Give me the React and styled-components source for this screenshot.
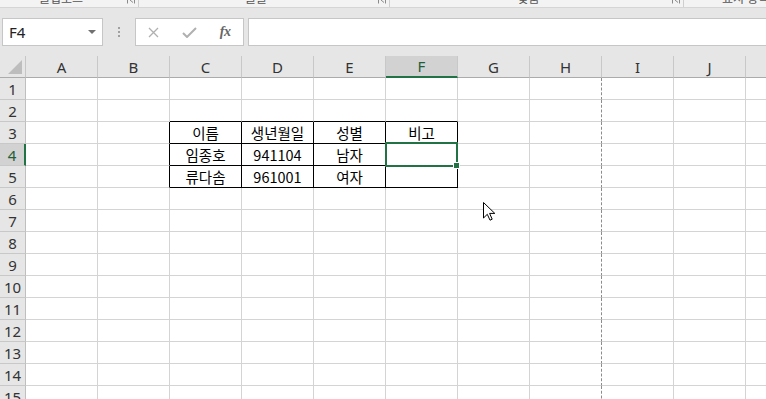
import React from 'react'
import styled, { createGlobalStyle } from 'styled-components'

const GlobalStyle = createGlobalStyle`
  body {
    margin: 0;
    background: #fff;
    overflow: hidden;
  }
`

const Window = styled.div`
  position: relative;
  width: 766px;
  height: 399px;
  overflow: hidden;
  background: #fff;
  font-family: "Noto Sans", "Noto Sans CJK KR", sans-serif;
`

/* ribbon bottom edge (group labels cut off by the window) */
const RibbonStrip = styled.div`
  display: flex;
  height: 7px;
  background: #f3f3f3;
  border-bottom: 1px solid #d5d5d5;
  overflow: hidden;
`

const RibbonGroup = styled.div`
  flex: none;
  width: ${p => p.$w}px;
  display: grid;
  grid-template-columns: 1fr 16px;
  box-sizing: border-box;
  border-right: 1px solid #cfcfcf;
`

const GroupLabel = styled.div`
  text-align: center;
  font-family: "Noto Sans CJK KR", sans-serif;
  font-size: 12px;
  line-height: 12px;
  margin-top: -8px;
  color: #555;
  white-space: nowrap;
`

const Launcher = styled.svg`
  display: block;
  margin: 0 0 0 5px;
`

const FormulaBar = styled.div`
  display: flex;
  align-items: center;
  height: 48px;
  padding-left: 2px;
  background: #e6e6e6;
`

const NameBox = styled.div`
  flex: none;
  box-sizing: border-box;
  width: 101px;
  height: 28px;
  display: flex;
  align-items: center;
  justify-content: space-between;
  padding: 0 6px 0 6px;
  background: #fff;
  border: 1px solid #c6c6c6;
  font-size: 15px;
  color: #222;
`

const Grip = styled.div`
  flex: none;
  width: 32px;
  display: flex;
  flex-direction: column;
  align-items: center;
  gap: 2px;

  span {
    width: 2px;
    height: 2px;
    background: #a0a0a0;
  }
`

const FxBox = styled.div`
  flex: none;
  box-sizing: border-box;
  width: 109px;
  height: 28px;
  display: grid;
  grid-template-columns: repeat(3, 1fr);
  align-items: center;
  justify-items: center;
  background: #fff;
  border: 1px solid #c6c6c6;
`

const Fx = styled.span`
  font-family: "Liberation Serif", serif;
  font-style: italic;
  font-weight: bold;
  font-size: 14px;
  color: #666;
  letter-spacing: -0.5px;
`

const FormulaInput = styled.div`
  flex: 1;
  box-sizing: border-box;
  height: 28px;
  margin-left: 4px;
  background: #fff;
  border: 1px solid #c6c6c6;
  border-right: none;
`

const HeaderRow = styled.div`
  display: flex;
  height: 22px;
  background: #e6e6e6;
`

const Corner = styled.div`
  flex: none;
  box-sizing: border-box;
  width: 26px;
  height: 22px;
  border-right: 1px solid #c6c6c6;
  border-bottom: 1px solid #ababab;
  display: flex;
  align-items: flex-end;
  justify-content: flex-end;
  padding: 0 3px 3px 0;
`

const ColHeader = styled.div`
  flex: none;
  box-sizing: border-box;
  width: 72px;
  height: 22px;
  display: flex;
  align-items: center;
  justify-content: center;
  font-size: 15px;
  color: ${p => (p.$active ? '#1e5e38' : '#333')};
  background: ${p => (p.$active ? '#d2d2d2' : '#e6e6e6')};
  border-right: 1px solid #c8c8c8;
  border-bottom: ${p => (p.$active ? '2px solid #217346' : '1px solid #ababab')};
`

const Row = styled.div`
  display: flex;
  height: 22px;
`

const RowHeader = styled.div`
  flex: none;
  box-sizing: border-box;
  width: 26px;
  height: 22px;
  display: flex;
  align-items: center;
  justify-content: center;
  font-size: 15px;
  color: ${p => (p.$active ? '#1e5e38' : '#333')};
  background: ${p => (p.$active ? '#d2d2d2' : '#e6e6e6')};
  border-right: ${p => (p.$active ? '2px solid #217346' : '1px solid #bfbfbf')};
  border-bottom: 1px solid #c8c8c8;
`

const Cell = styled.div`
  position: relative;
  flex: none;
  box-sizing: border-box;
  width: 72px;
  height: 22px;
  display: flex;
  align-items: center;
  justify-content: center;
  font-family: "Noto Sans CJK KR", sans-serif;
  font-size: 14.5px;
  color: #000;
  border-right: 1px ${p => (p.$dashed ? 'dashed' : 'solid')} ${p => p.$rc};
  border-bottom: 1px solid ${p => p.$bc};
`

const Selection = styled.div`
  position: absolute;
  z-index: 2;
  left: -1px;
  top: -2px;
  width: 73px;
  height: 25px;
  box-sizing: border-box;
  border: 2px solid #217346;
`

const FillHandle = styled.div`
  position: absolute;
  right: -4px;
  bottom: -4px;
  width: 5px;
  height: 5px;
  background: #217346;
  border: 1px solid #fff;
`

const Cursor = styled.svg`
  position: absolute;
  left: 483px;
  top: 202px;
  z-index: 5;
`

const groups = [
  { w: 139, label: '클립보드' },
  { w: 251, label: '글꼴' },
  { w: 294, label: '맞춤' },
  { w: 140, label: '표시 형식' },
]

const cols = ['A', 'B', 'C', 'D', 'E', 'F', 'G', 'H', 'I', 'J', '']

const data = {
  3: { 2: '이름', 3: '생년월일', 4: '성별', 5: '비고' },
  4: { 2: '임종호', 3: '941104', 4: '남자' },
  5: { 2: '류다솜', 3: '961001', 4: '여자' },
}

const GRID = '#d4d4d4'

function rightColor(r, c) {
  if (r >= 3 && r <= 5 && c >= 1 && c <= 5) return '#000'
  if (c === 7) return '#8c8c8c'
  return GRID
}

function bottomColor(r, c) {
  if (c >= 2 && c <= 5 && r >= 2 && r <= 5) return '#000'
  return GRID
}

export default function App() {
  const rows = Array.from({ length: 15 }, (_, i) => i + 1)

  return (
    <Window>
      <GlobalStyle />
      <RibbonStrip>
        {groups.map(g => (
          <RibbonGroup key={g.label} $w={g.w}>
            <GroupLabel>{g.label}</GroupLabel>
            <Launcher width="8" height="4" viewBox="0 0 8 4">
              <path d="M0.5 0 V3.5 M7.5 0 V3.5" stroke="#8a8a8a" fill="none" />
              <path d="M3 0 L6 2.5" stroke="#8a8a8a" fill="none" />
            </Launcher>
          </RibbonGroup>
        ))}
      </RibbonStrip>

      <FormulaBar>
        <NameBox>
          <span>F4</span>
          <svg width="8" height="4" viewBox="0 0 8 4">
            <path d="M0 0 H8 L4 4 Z" fill="#707070" />
          </svg>
        </NameBox>
        <Grip>
          <span />
          <span />
          <span />
        </Grip>
        <FxBox>
          <svg width="11" height="11" viewBox="0 0 11 11">
            <path d="M1 1 L10 10 M10 1 L1 10" stroke="#b0b0b0" strokeWidth="1.3" fill="none" />
          </svg>
          <svg width="15" height="11" viewBox="0 0 15 11">
            <path d="M1 6 L5 10 L14 1" stroke="#b0b0b0" strokeWidth="2" fill="none" />
          </svg>
          <Fx>fx</Fx>
        </FxBox>
        <FormulaInput />
      </FormulaBar>

      <HeaderRow>
        <Corner>
          <svg width="14" height="14" viewBox="0 0 14 14">
            <path d="M14 0 V14 H0 Z" fill="#bdbdbd" />
          </svg>
        </Corner>
        {cols.map((c, i) => (
          <ColHeader key={i} $active={c === 'F'}>
            {c}
          </ColHeader>
        ))}
      </HeaderRow>

      {rows.map(r => (
        <Row key={r}>
          <RowHeader $active={r === 4}>{r}</RowHeader>
          {cols.map((_, c) => (
            <Cell key={c} $rc={rightColor(r, c)} $bc={bottomColor(r, c)} $dashed={c === 7}>
              {data[r] && data[r][c]}
              {r === 4 && c === 5 && (
                <Selection>
                  <FillHandle />
                </Selection>
              )}
            </Cell>
          ))}
        </Row>
      ))}

      <Cursor width="13" height="19" viewBox="0 0 13 19">
        <path
          d="M0.5 0.5 V16 L4.3 12.3 L7 18.2 L9.2 17.2 L6.6 11.4 H11.8 Z"
          fill="#fff"
          stroke="#000"
          strokeWidth="1"
          strokeLinejoin="round"
        />
      </Cursor>
    </Window>
  )
}
